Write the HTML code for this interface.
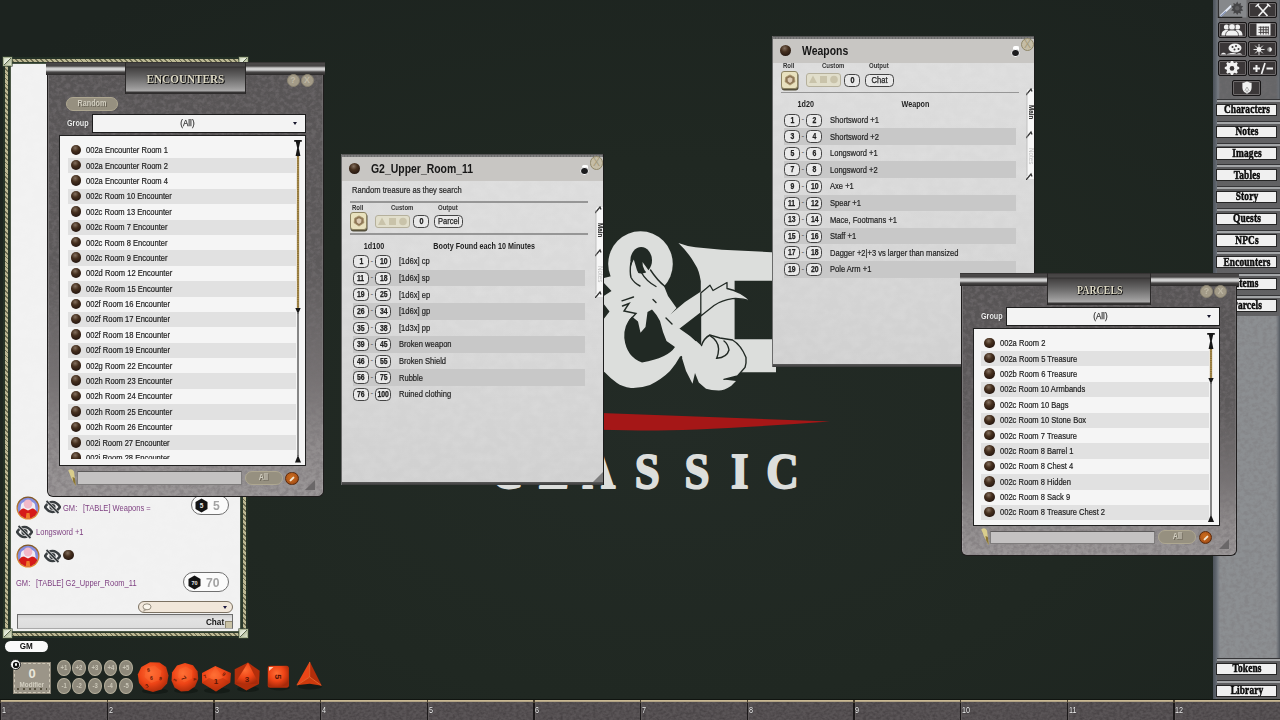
<!DOCTYPE html>
<html lang="en"><head><meta charset="utf-8"><title>Fantasy Grounds - D&amp;D Classic</title>
<style>
*{box-sizing:border-box;margin:0;padding:0}
html,body{width:1280px;height:720px;overflow:hidden;background:#1f2722}
body{position:relative;font-family:"Liberation Sans",sans-serif;font-size:9px;color:#262626;line-height:1}
#bg{position:absolute;left:0;top:0;width:1280px;height:720px;background:radial-gradient(ellipse 70% 75% at 52% 60%,#232b26 0,#202822 50%,#1c231f 100%)}
.tex{position:absolute;left:0;top:0;right:0;bottom:0;filter:url(#noise);opacity:.48}
.tex.p{filter:url(#paper);opacity:.22}
.t{display:inline-block;transform:scaleX(.84);transform-origin:0 50%;white-space:nowrap}
.ball{position:absolute;width:11px;height:11px;border-radius:50%;background:radial-gradient(circle at 42% 30%,#84705f 0,#46301f 36%,#2a1a12 72%,#1a100b 100%)}
/* list windows */
.lw{position:absolute;width:279px}
.lw-body{position:absolute;left:1.2px;top:11px;width:276.6px;bottom:0;border-radius:0 0 6px 6px;background:linear-gradient(#575455 0,#5d5a5b 45%,#767273 72%,#908c8d 88%,#9b9798 100%);border:1.3px solid #1e1c1c;border-top:0;overflow:hidden;box-shadow:inset 1px 0 0 rgba(255,255,255,.18),inset -1px 0 0 rgba(255,255,255,.1)}
.corn{position:absolute;top:0;height:13px;width:80px;background:linear-gradient(#2f2d2d 0,#4a4848 1.5px,#454343 4px,#8a8989 5px,#cdcdcd 6px,#d2d2d2 8px,#8e8d8d 9px,#4a4848 10px,#3a3838 11.5px,#2b2929 13px)}
.corn.l{left:0}.corn.r{right:0}
.plaque{position:absolute;top:0;height:32px;border-left:1px solid #2a2828;border-right:1px solid #2a2828;background:linear-gradient(#2e2c2c 0,#454343 1.5px,#4a4848 4px,#343232 5px,#454343 6.5px,#626161 14px,#959494 25px,#aaa9a9 29px,#3a3838 30px,#2c2a2a 32px);text-align:center}
.ptitle{display:inline-block;font:bold 12.5px "Liberation Serif",serif;color:#dedac6;text-shadow:1px 1px 0 #000,0 0 1.5px #000;line-height:34px;white-space:nowrap;transform-origin:50% 50%}
.enc .ptitle{transform:scaleX(.895)}
.par .ptitle{transform:translateX(1px) scaleX(.795)}
.rb{position:absolute;top:11.5px;width:13px;height:13px;border-radius:50%;background:#a39b88;border:1px solid #8b8472;color:#bfb8a5;font:bold 9px "Liberation Sans",sans-serif;text-align:center;line-height:11px}
.pill{position:absolute;height:14px;border-radius:7px;background:#969080;border:1.5px solid #aea791;color:#d2cec0;font:bold 8.5px "Liberation Sans",sans-serif;text-align:center;line-height:11px;text-shadow:1px 1px 0 #6a6558}
.pill span{display:inline-block;transform:scaleX(.85)}
.random{left:20px;top:35px;width:52px}
.all{left:198.5px;width:38px}
.grp{position:absolute;left:21px;color:#efefef;font:bold 9px "Liberation Sans",sans-serif;line-height:12px;transform:scaleX(.8);transform-origin:0 50%;text-shadow:0 0 1px #222}
.dd{position:absolute;left:46px;width:214px;height:18.5px;background:#f3f3f3;border:1px solid #1c1c1c;text-align:center;padding-right:24px;line-height:16.5px;font-size:9.5px;color:#333}
.dd .t{transform-origin:50% 50%;-webkit-text-stroke:.25px #333}
.dd i{position:absolute;right:8px;top:7px;border:2.7px solid transparent;border-top:3.4px solid #15152a;border-bottom:0}
.list{position:absolute;left:13px;width:247px;background:#f5f5f5;border:1px solid #202020;overflow:hidden}
.clip{position:absolute;left:0;top:6.6px;width:100%;overflow:hidden}
.row{position:relative;height:15.4px;line-height:15.4px}
.row.sh:before{content:"";position:absolute;left:7.5px;width:228px;top:0;bottom:0;background:#e1e1e1}
.row .ball{left:10.7px;top:2px;width:10.5px;height:10.5px}
.row .t{position:absolute;left:26.2px;top:.6px;color:#1c1c1c;-webkit-text-stroke:.2px #1c1c1c}
.sb{position:absolute;left:230.5px;top:-1px}
.fig{position:absolute;left:20.5px}
.filt{position:absolute;left:30.5px;width:165px;height:13.5px;background:#c4c2c2;border:1px solid #7e7c7c;border-top-color:#5c5a5a}
.edit{position:absolute;left:239.3px;width:13.4px;height:13.4px;border-radius:50%;background:radial-gradient(circle at 45% 40%,#cc6e1e 0,#b05618 60%,#74320c 100%);border:1px solid #5c2a0a}
.edit i{position:absolute;left:3px;top:5px;width:6px;height:2px;background:#f4e7d3;transform:rotate(-45deg);border-radius:1px}
.rsz{position:absolute;left:259px;width:0;height:0;border-left:10px solid transparent;border-bottom:10px solid #6a6768}
/* table windows */
.tw{position:absolute;width:263px;height:331.2px;background:linear-gradient(#dddddd 0,#d9d9d9 45%,#d0d0d0 100%);border-left:1px solid #6a6a6a;border-right:1px solid #1c1c1c;overflow:hidden}
.tband{position:absolute;left:0;top:0;width:100%;height:3.3px;background:repeating-linear-gradient(90deg,#7e7e7e 0,#7e7e7e 2px,#6e6e6e 2px,#6e6e6e 3px);border-top:1px solid #585858}
.thead{position:absolute;left:0;top:3.3px;width:100%;height:23.8px;background:#c8c6c3}
.ttitle{position:absolute;left:28.7px;top:8.6px;font:bold 12.5px "Liberation Sans",sans-serif;color:#161616;line-height:14px;white-space:nowrap}
.ttitle span{display:inline-block;transform:scaleX(.835);transform-origin:0 50%}
.lock{position:absolute;left:238px;top:9.6px;width:8.6px;height:12px}
.lock:before{content:"";position:absolute;left:2.3px;top:1.2px;width:4px;height:5px;border:1.3px solid #fff;border-bottom:0;border-radius:2px 2px 0 0;background:#fff}
.lock i{position:absolute;left:0;top:3.6px;width:8.6px;height:8.4px;border-radius:4.2px;background:#1c1c1e;border:1px solid #f6f6f6}
.cls{position:absolute;left:247.6px;top:2.2px;width:13.6px;height:13.6px;border-radius:50%;background:#c5bda6;border:1.1px solid #8f8769;color:#a39a7c;font:10.5px "Liberation Sans",sans-serif;text-align:center;line-height:11.6px}
.desc{position:absolute;left:10.4px;color:#1e1e1e;-webkit-text-stroke:.2px #1e1e1e;line-height:10px;color:#2b2b2b}
.hr{position:absolute;left:8px;width:238px;height:1.3px;background:#969696}
.lab{position:absolute;font:bold 7px "Liberation Sans",sans-serif;color:#333;line-height:8px;white-space:nowrap}
.lab span{display:inline-block;transform:scaleX(.86);transform-origin:0 50%}
.rollb{position:absolute;left:7.7px;width:17.6px;height:18px;border-radius:3px;background:#e9e2bf;border:1px solid #8d8463;box-shadow:.5px 1.5px 0 #55503c;padding:2px}
.rollb svg{display:block}
.cust{position:absolute;left:32.6px;width:35.3px;height:13.2px;border-radius:3px;background:#e1decb;border:1px solid #b5b09c}
.cust svg{position:absolute;left:-1px;top:-1px}
.nb{position:absolute;height:12.9px;border:1.5px solid #444;border-radius:4.4px;background:#e9e9e9;-webkit-text-stroke:.25px #202020;font:bold 8.6px "Liberation Sans",sans-serif;color:#202020;text-align:center;line-height:10.6px;white-space:nowrap}
.nb span{display:inline-block;transform:scaleX(.84)}
.zero{left:71.3px;width:15.4px}
.outb{left:92.4px;width:28.4px;font-weight:normal;font-size:9px}
.colh{position:absolute;text-align:center;font:bold 8.5px "Liberation Sans",sans-serif;color:#1e1e1e;line-height:10px;white-space:nowrap}
.colh span{display:inline-block;transform:scaleX(.845)}
.rows{position:absolute;left:0;width:100%}
.tr{position:relative;height:16.6px;line-height:16.6px}
.tr.sh:before{content:"";position:absolute;left:10.6px;width:232.4px;top:0;bottom:0;background:#c8c8c8}
.tr .a{left:10.9px;top:2px;width:16.3px}
.tr .b{left:33.4px;top:2px;width:16.1px}
.tr .nb span{transform:scaleX(.8)}
.dash{position:absolute;left:28.6px;top:-.5px;color:#444;font-size:8px}
.tr .t{position:absolute;left:57px;top:.3px;color:#1e1e1e;-webkit-text-stroke:.2px #1e1e1e}
.tabs{position:absolute;left:253px;width:10px;height:92px}
.tabs svg{position:absolute;left:0;top:0}
.tab{position:absolute;left:5px;font:bold 6.3px "Liberation Sans",sans-serif;color:#1a1a1a;transform:rotate(90deg) translateZ(0);transform-origin:0 0;white-space:nowrap;line-height:1}
.tab.m{top:17px;left:7.6px}
.tab.n{top:60px;left:7.6px;color:#bdbdbd;font-weight:normal}
.trsz{position:absolute;right:0;bottom:2.5px;width:0;height:0;border-left:10px solid transparent;border-bottom:10px solid #7d7d7d}
.tbot{position:absolute;left:0;bottom:0;width:100%;height:3px;background:linear-gradient(#5a5a5a,#3a3a3a)}
/* sidebar */
#side{position:absolute;left:1213px;top:0;width:67px;height:700px;background:#8c8f92;overflow:hidden}
#side .tex{opacity:.3}
.stop{position:absolute;left:0;top:0;width:100%;height:99px;background:#666668}
.sedge{position:absolute;left:0;top:0;width:100%;height:100%;background:linear-gradient(90deg,#4c525a 0,#5f656d 3px,#767b82 5px,rgba(118,123,130,0) 7px,rgba(100,104,110,0) 63px,#6a6e74 65.5px,#555a60 67px)}
.ib{position:absolute;width:29px;height:16px;background:#3b3738;border:1px solid #161415;border-radius:2px;box-shadow:inset 0 0 0 1px #6e6a6b}
.ib svg{position:absolute;left:-.5px;top:-.5px}
.ib0{position:absolute}
.sl{position:absolute;left:3.5px;width:63.5px;height:21.8px;border-top:1.2px solid #353537;background:linear-gradient(#a4a6a8 0,#a4a6a8 1.5px,#5c5c5e 2.5px,#626264 100%)}
.sbtn{position:absolute;left:3.4px;width:60.4px;height:12.4px;background:#f0f0f0;border:1px solid #252525;text-align:center;font:bold 13px "Liberation Serif",serif;color:#0c0c0c;line-height:10.5px;white-space:nowrap;overflow:hidden}
.sbtn span{position:absolute;left:50%;top:-.4px;transform:translateX(-50%) scaleX(.72) translateZ(0);letter-spacing:.2px;-webkit-text-stroke:.55px #0c0c0c}
/* bottom bar */
#bot{position:absolute;left:0;top:699px;width:1280px;height:21px;background:#5a5557;overflow:hidden;border-top:1px solid #101410}
#bot .tex{opacity:.6;filter:url(#noise2)}
.bline{position:absolute;left:0;top:0;width:100%;height:2.2px;background:linear-gradient(#bfae88,#d2c29e 50%,#8f826a)}
.bdiv{position:absolute;top:0;width:1.4px;height:21px;background:linear-gradient(#4a4030 0,#4a4030 3px,#1b1819 3px);box-shadow:1px 2px 0 #5e595a}
.bnum{position:absolute;top:5.5px;font:8.5px "Liberation Sans",sans-serif;color:#f4f4f4;line-height:8px;transform:scaleX(.85);transform-origin:0 50%;text-shadow:0 0 1px #000}
/* chat */
#chat{position:absolute;left:3px;top:57px;width:244.5px;height:581px;background:#243126}
.cgold{position:absolute;left:1.6px;top:1.8px;right:1.8px;bottom:1.8px;border:3.2px solid #a5a27c;border-image:repeating-linear-gradient(45deg,#bdb994 0,#bdb994 2.2px,#6e6d52 2.2px,#6e6d52 3.5px) 3;background:#2b3a2c}
.cpaper{position:absolute;left:8px;top:7.4px;width:228.6px;height:566.2px;background:#f1f1f1;overflow:hidden;box-shadow:0 0 0 .8px #55604f}
.corner{position:absolute;width:9.4px;height:9.4px;background:linear-gradient(135deg,#cdd6bc 0,#e9eedf 44%,#5b6650 50%,#b9c2a4 56%,#dfe5d0 100%);border:1.2px solid #a9b394;box-shadow:0 0 0 .6px #3c4a38}
.av,.eye,.hx{position:absolute}
.cm{position:absolute;font-size:9.3px;line-height:12px;color:#7d3f80;white-space:nowrap}
.cm .t{transform:scaleX(.81)}
.rpill{position:absolute;height:20px;border-radius:10px;background:#fbfbfb;border:1.1px solid #707070}
.rn{position:absolute;top:2.2px;font:bold 13.5px "Liberation Sans",sans-serif;color:#a3a3a3;line-height:15px;transform:scaleX(.9);transform-origin:0 50%}
.spk{position:absolute;width:95px;height:12.6px;border-radius:6.3px;background:#f1e7da;border:1.2px solid #7b7162}
.spk svg{position:absolute;left:3.5px;top:1.2px}
.spk i{position:absolute;right:4.6px;top:4.2px;border:2.4px solid transparent;border-top:3px solid #1b1740;border-bottom:0}
.cin{position:absolute;width:215.5px;height:15px;background:linear-gradient(#cfcfcf,#e2e2e2 30%,#dcdcdc);border:1px solid #6c6c6c;border-bottom-color:#a9a9a9}
.chatl{position:absolute;right:7.5px;top:1.5px;font:bold 9.5px "Liberation Sans",sans-serif;color:#111;line-height:11px;transform:scaleX(.86);transform-origin:100% 50%}
.cin em{position:absolute;right:0;bottom:0;width:7px;height:7px;background:#c9c2a6;border-left:1px solid #8d876e;border-top:1px solid #8d876e}
/* desktop bits */
.gm{position:absolute;left:5.3px;top:640.8px;width:42.6px;height:11.2px;border-radius:5.6px;background:#fafafa;text-align:center;font:bold 9px "Liberation Sans",sans-serif;color:#111;line-height:11.4px}
.gm span{display:inline-block;transform:scaleX(.9)}
.modbox{position:absolute;left:14.4px;top:663px;width:35.6px;height:29.6px;background:#9b9588;border:1.2px dashed #cfc9b8;outline:1px solid #8a8477;text-align:center}
.modbox .m0{position:absolute;left:0;width:100%;top:3px;font:bold 13px "Liberation Sans",sans-serif;color:#e9e6da;line-height:13px}
.modbox .m1{position:absolute;left:0;width:100%;top:16.5px;font:bold 7px "Liberation Sans",sans-serif;color:#d4d0c2;line-height:8px;transform:scaleX(.9)}
.modbox i{position:absolute;left:2px;right:2px;bottom:1.5px;height:2px;background:repeating-linear-gradient(90deg,#55503f 0,#55503f 2px,transparent 2px,transparent 5.8px)}
.ring{position:absolute;left:9.8px;top:658.5px;width:11.2px;height:11.2px;border-radius:50%;background:#f6f6f6;border:.5px solid #222}
.ring i{position:absolute;left:2px;top:2px;width:6.2px;height:6.2px;border-radius:50%;background:#151515;box-shadow:inset 0 0 0 1.5px #151515}
.ring i:after{content:"";position:absolute;left:1.8px;top:1.8px;width:2.6px;height:2.6px;background:#f6f6f6;border-radius:1px}
.mb{position:absolute;width:13.8px;height:16.4px;border-radius:50%;background:#8e897b;border:1.2px solid #b3ad9a;color:#cbc7b8;font:bold 7px "Liberation Sans",sans-serif;text-align:center;line-height:14px}
.mb span{display:inline-block;transform:scaleX(.85)}

</style></head>
<body>
<svg width="0" height="0" style="position:absolute">
<defs>
<filter id="noise" x="0" y="0" width="100%" height="100%" color-interpolation-filters="sRGB">
<feTurbulence type="fractalNoise" baseFrequency="0.22 0.26" numOctaves="3" seed="4" result="n"/>
<feColorMatrix type="matrix" values="0 0 0 0 0.47  0 0 0 0 0.45  0 0 0 0 0.46  3 0 0 0 -1.15"/>
<feGaussianBlur stdDeviation=".7"/>
</filter>
<filter id="noise2" x="0" y="0" width="100%" height="100%" color-interpolation-filters="sRGB">
<feTurbulence type="fractalNoise" baseFrequency="0.3 0.4" numOctaves="2" seed="9"/>
<feColorMatrix type="matrix" values="0 0 0 0 0.15  0 0 0 0 0.13  0 0 0 0 0.14  1.2 0 0 0 -0.4"/>
</filter>
<filter id="paper" x="0" y="0" width="100%" height="100%" color-interpolation-filters="sRGB">
<feTurbulence type="fractalNoise" baseFrequency="0.09 0.12" numOctaves="2" seed="12"/>
<feColorMatrix type="matrix" values="0 0 0 0 1  0 0 0 0 1  0 0 0 0 1  0.9 0 0 0 -0.3"/>
</filter>
</defs>
</svg>
<div id="bg"></div>
<svg id="logo" style="position:absolute;left:470px;top:220px" width="400" height="290" viewBox="470 220 400 290">
<g fill="#dcdedc">
<!-- D letter -->
<path d="M678.4 243Q686 246 695.5 247.3L722 249.8L776 252.4V280.7H734.6V339.3H776V372.2H700.8V281.2Q699 270 695.5 265Q689 253 678.4 243Z"/>
<!-- upper ring -->
<ellipse cx="640.5" cy="264" rx="32.3" ry="32.8"/>
<!-- lower bowl -->
<path d="M596 290L640 284L668 320L690 352L680 356.5Q676 364 670 371Q662 379 650 385Q640 388.5 631 388Q622 386.5 617 383Q610 378 605 372.5L596 366Z"/>
<!-- head, neck, diagonal body -->
<path d="M600 279L612 276L640 282L664 286L668 296L676.5 308L671 314L669 321L680 329L690 336L701 346L716 337L722 356L700 372L684 359L672 344L660 322L640 300L600 300Z"/>
<!-- wing stroke -->
<path d="M664 319L669 315.5L685 302L701 291.5L704 300L701 312L679 329L668 323Z"/>
<!-- tail -->
<path d="M682 358Q690 340 710 335L720 338L732.5 340Q741 345 746 357.5Q746.5 363 745 367.5L737.5 376L724 379.4L736 381L731 386Q724 390.5 718.8 390.6Q711 390.5 706 388.8L698.8 382.5L695 373L692.5 383.8L686 371Z"/>
</g>
<g fill="#212924">
<!-- upper hole -->
<ellipse cx="641.2" cy="260.3" rx="10.8" ry="13.2"/>
<!-- lower hole -->
<path d="M624.3 338Q623.5 325 632 316.5L638 321.5L640.5 332.8L645.5 327L647.5 312L652 309.5L656.5 315L660 321L663 332L666.5 341L675 347Q668 358 642 362.5Q626.5 357 624.3 338Z"/>
<!-- gap under wing stroke -->
<path d="M683 329.5L701.2 313V345.5L690 335.5Z"/>
<!-- mane notches -->
<path d="M603 282L611.5 291L603 296.5ZM603 303L609.5 311.5L603 320Z"/>
</g>
<g fill="#dcdedc">
<path d="M630.2 279Q629.8 266 633.8 259.6Q636 270 641.6 280Z"/>
<path d="M651 277Q642 270 642.5 262Q648 270 655.5 279Z"/>
</g>
<!-- wing over D -->
<path d="M700.8 293L710 285.2L713 290.5L727 282.5L727 288.5Q740 291 751 301Q742 298 732.5 298.6Q722 300 714 305.5L700.8 316Z" fill="#dcdedc" stroke="#212924" stroke-width="1.3" stroke-linejoin="round"/>
<g fill="none" stroke="#212924" stroke-width="1.4" stroke-linecap="round">
<path d="M630.8 263Q629.6 272 631 277.5Q634 283 640 286"/>
<path d="M641.4 272.5Q646 281 656 286.5"/>
<path d="M650.5 270Q657 280 665 286.5"/>
<path d="M622 300.8L633.5 297"/>
<path d="M622.5 306L629 303.5L624 311L636 313.5L630 320"/>
<path d="M653 299.5L656 302.5"/>
<path d="M709.7 335.4Q718.5 341 718.6 349Q718.5 354 716.7 358.3Q727 357.5 729 350Q728 344 724 341"/>
<path d="M666 318L672 324"/>
<path d="M701.5 345.5Q704 338 710 335L720 338L732.5 340Q741 345 746 357.5Q746.5 363 745 367.5L737.5 376L724 379.4"/>
</g>
<path d="M560 411.6L830 421.5Q700 431 640 430.5Q600 430 560 428Z" fill="#a51717"/>
<text y="488.2" transform="scale(0.9 1)" text-anchor="middle" font-family="Liberation Serif, serif" font-weight="bold" font-size="50" fill="#dcdedc" stroke="#dcdedc" stroke-width="1.9" stroke-linejoin="round" x="563.3 615.6 665.6 719.3 774.4 821.9 869.4">CLASSIC</text>
</svg>
<div id="side"><div class="stop"></div><div class="tex"></div><div class="sedge"></div>
<svg class="ib0" style="left:4px;top:0" width="30" height="19" viewBox="0 0 30 19"><rect x=".5" y="0" width="29" height="17.5" fill="#86888b"/><path d="M1.3 0v17.4h24" stroke="#222" stroke-width="1.1" fill="none"/><path d="M3.5 16L14.3 5.8" stroke="#e3e9f6" stroke-width="2"/><path d="M3.5 16.5L9 11.5" stroke="#7f8fb3" stroke-width="1.2"/><path d="M20.2 1.5l1.3 2.4 2.6-1-.6 2.7 2.7.6-1.8 2.1 1.8 2.1-2.7.6.6 2.7-2.6-1-1.3 2.4-1.3-2.4-2.6 1 .6-2.7-2.7-.6 1.8-2.1-1.8-2.1 2.7-.6-.6-2.7 2.6 1z" fill="#454547"/><circle cx="20.2" cy="8.3" r="2.2" fill="#5c5c5e"/></svg>
<div class="ib" style="left:35px;top:2px"><svg width="28" height="15" viewBox="0 0 28 15"><path d="M8 1.5l10.5 11.5M20 1.5L9.5 13" stroke="#f2f2f2" stroke-width="1.7"/><path d="M6.5 3.8l3.6-3M21.5 3.8l-3.6-3" stroke="#f2f2f2" stroke-width="1.3"/></svg></div>
<div class="ib" style="left:4.5px;top:21.5px"><svg width="28" height="15" viewBox="0 0 28 15"><circle cx="8.5" cy="5" r="2.6" fill="#f2f2f2"/><circle cx="19.5" cy="5" r="2.6" fill="#f2f2f2"/><path d="M3.5 13.5c0-4 2-5.5 5-5.5s5 1.5 5 5.5zM14.5 13.5c0-4 2-5.5 5-5.5s5 1.5 5 5.5z" fill="#f2f2f2"/><circle cx="14" cy="5" r="3.4" fill="#f2f2f2" stroke="#3a3637" stroke-width=".8"/><path d="M7.5 14c0-4.5 2.5-6 6.5-6s6.5 1.5 6.5 6z" fill="#f2f2f2" stroke="#3a3637" stroke-width=".8"/></svg></div>
<div class="ib" style="left:35px;top:21.5px"><svg width="28" height="15" viewBox="0 0 28 15"><rect x="7.5" y="1.5" width="14" height="12" fill="#f2f2f2"/><path d="M9.5 5.2h10M9.5 7.8h10M9.5 10.4h10M11.7 4.5v8M14.3 4.5v8M17 4.5v8M19.3 4.5v8" stroke="#3a3637" stroke-width=".9"/></svg></div>
<div class="ib" style="left:4.5px;top:41px"><svg width="28" height="15" viewBox="0 0 28 15"><ellipse cx="17" cy="6" rx="6.5" ry="4.5" fill="#f2f2f2"/><path d="M2.5 12.5c2-2.5 4-2.5 6 0 3-2 8-2 10-.5 2-1 4-1 6 .5z" fill="#f2f2f2"/><circle cx="14.5" cy="5" r="1" fill="#3a3637"/><circle cx="18" cy="4" r="1" fill="#3a3637"/><circle cx="16.5" cy="7.5" r="1" fill="#3a3637"/><circle cx="20.5" cy="7" r="1" fill="#3a3637"/></svg></div>
<div class="ib" style="left:35px;top:41px"><svg width="28" height="15" viewBox="0 0 28 15"><circle cx="10" cy="7.5" r="2.4" fill="#f2f2f2"/><path d="M10 2v11M4.5 7.5h11M6.2 3.7l7.6 7.6M13.8 3.7l-7.6 7.6" stroke="#f2f2f2" stroke-width=".9"/><circle cx="20.5" cy="7.5" r="2.3" fill="#8e8e8e"/><path d="M20.5 5.2a2.3 2.3 0 0 1 0 4.6z" fill="#f2f2f2"/></svg></div>
<div class="ib" style="left:4.5px;top:60px"><svg width="28" height="15" viewBox="0 0 28 15"><path d="M14 2.2l1 .1.5 1.7 1.3.6 1.6-.9 1.4 1.4-.9 1.6.6 1.3 1.7.5v2l-1.7.5-.6 1.3.9 1.6-1.4 1.4-1.6-.9-1.3.6-.5 1.7h-2l-.5-1.7-1.3-.6-1.6.9-1.4-1.4.9-1.6-.6-1.3-1.7-.5v-2l1.7-.5.6-1.3-.9-1.6 1.4-1.4 1.6.9 1.3-.6.5-1.7z" transform="translate(0,-2.6)" fill="#f2f2f2"/><circle cx="14" cy="7.4" r="2.3" fill="#3a3637"/></svg></div>
<div class="ib" style="left:35px;top:60px"><svg width="28" height="15" viewBox="0 0 28 15"><path d="M4 7.5h7M7.5 4v7M17.5 7.5h6.5" stroke="#f2f2f2" stroke-width="2"/><path d="M12.5 13L16 2" stroke="#f2f2f2" stroke-width="1.7"/></svg></div>
<div class="ib" style="left:19px;top:79.5px"><svg width="28" height="15" viewBox="0 0 28 15"><path d="M14 1.5c2 1 3.5 1.3 4.6 1.3v5c0 3-2 4.8-4.6 6-2.6-1.2-4.6-3-4.6-6v-5c1.1 0 2.6-.3 4.6-1.3z" fill="#f2f2f2"/><path d="M11.8 11l2.2-4 2.2 4M12.6 13l1.4-2.6 1.4 2.6" stroke="#9a9a9a" stroke-width=".8" fill="none"/></svg></div>
<div class="sl" style="top:99.1px"></div><div class="sbtn" style="top:103.8px"><span>Characters</span></div>
<div class="sl" style="top:120.8px"></div><div class="sbtn" style="top:125.5px"><span>Notes</span></div>
<div class="sl" style="top:142.7px"></div><div class="sbtn" style="top:147.4px"><span>Images</span></div>
<div class="sl" style="top:164.4px"></div><div class="sbtn" style="top:169.1px"><span>Tables</span></div>
<div class="sl" style="top:186.1px"></div><div class="sbtn" style="top:190.8px"><span>Story</span></div>
<div class="sl" style="top:208.1px"></div><div class="sbtn" style="top:212.8px"><span>Quests</span></div>
<div class="sl" style="top:229.6px"></div><div class="sbtn" style="top:234.3px"><span>NPCs</span></div>
<div class="sl" style="top:251.3px"></div><div class="sbtn" style="top:256px"><span>Encounters</span></div>
<div class="sl" style="top:273.1px"></div><div class="sbtn" style="top:277.8px"><span>Items</span></div>
<div class="sl" style="top:294.7px"></div><div class="sbtn" style="top:299.4px"><span>Parcels</span></div>
<div class="sl" style="top:657.8px"></div><div class="sbtn" style="top:662.5px"><span>Tokens</span></div>
<div class="sl" style="top:680.1px"></div><div class="sbtn" style="top:684.8px"><span>Library</span></div>
</div>
<div id="bot"><div class="tex"></div><div class="bline"></div>
<div class="bdiv" style="left:0.0px"></div><span class="bnum" style="left:2.0px">1</span>
<div class="bdiv" style="left:106.7px"></div><span class="bnum" style="left:108.7px">2</span>
<div class="bdiv" style="left:213.3px"></div><span class="bnum" style="left:215.3px">3</span>
<div class="bdiv" style="left:320.0px"></div><span class="bnum" style="left:322.0px">4</span>
<div class="bdiv" style="left:426.7px"></div><span class="bnum" style="left:428.7px">5</span>
<div class="bdiv" style="left:533.4px"></div><span class="bnum" style="left:535.4px">6</span>
<div class="bdiv" style="left:640.0px"></div><span class="bnum" style="left:642.0px">7</span>
<div class="bdiv" style="left:746.7px"></div><span class="bnum" style="left:748.7px">8</span>
<div class="bdiv" style="left:853.4px"></div><span class="bnum" style="left:855.4px">9</span>
<div class="bdiv" style="left:960.0px"></div><span class="bnum" style="left:962.0px">10</span>
<div class="bdiv" style="left:1066.7px"></div><span class="bnum" style="left:1068.7px">11</span>
<div class="bdiv" style="left:1173.4px"></div><span class="bnum" style="left:1175.4px">12</span>
</div>
<div id="chat"><svg width="0" height="0" style="position:absolute"><defs><linearGradient id="avg" x1="0" y1="0" x2="0" y2="1"><stop offset="0" stop-color="#7a5426"/><stop offset=".5" stop-color="#c27a2a"/><stop offset="1" stop-color="#ee8c2c"/></linearGradient></defs></svg><div class="cgold"></div><div class="cpaper"><div class="tex p"></div></div>
<div class="corner" style="left:0px;top:0px"></div><div class="corner" style="left:235.5px;top:0px"></div><div class="corner" style="left:0px;top:572px"></div><div class="corner" style="left:235.5px;top:572px"></div>
<svg class="av" style="left:13px;top:438.5px" width="24" height="24" viewBox="0 0 24 24"><defs><clipPath id="ca1"><circle cx="12" cy="12" r="10.3"/></clipPath></defs><circle cx="12" cy="12" r="11.5" fill="url(#avg)"/><circle cx="12" cy="12" r="10.3" fill="#858ee0"/><g clip-path="url(#ca1)"><path d="M5 9c1-5 13-5 14 0l1 7H4z" fill="#f1ecf2"/><ellipse cx="12" cy="8" rx="4.3" ry="4.6" fill="#f2b9c9"/><path d="M8 11c1.5 3 6.5 3 8 0l1 4H7z" fill="#f6f3f6"/><path d="M1 24c0-8 4-11.5 7-11.5l4 2 4-2c3 0 7 3.5 7 11.5z" fill="#d61a18"/><path d="M10.5 17h3l1 7h-5z" fill="#ee7a2a"/></g></svg>
<svg class="eye" style="left:40.5px;top:443px" width="17" height="14" viewBox="0 0 17 14"><path d="M1 7c2.5-3.8 5-5 7.5-5s5 1.2 7.5 5c-2.5 3.8-5 5-7.5 5S3.5 10.8 1 7z" fill="none" stroke="#393e41" stroke-width="2.4"/><circle cx="8.5" cy="7" r="3.1" fill="#393e41"/><path d="M2.5 1L14 13" stroke="#f2f2f2" stroke-width="3"/><path d="M2.5 1L14.5 13" stroke="#393e41" stroke-width="1.8"/></svg>
<div class="cm" style="left:60px;top:444.5px"><span class="t">GM:</span></div><div class="cm" style="left:80px;top:444.5px"><span class="t">[TABLE] Weapons =</span></div>
<div class="rpill" style="left:188px;top:437.5px;width:37.5px"><svg class="hx" style="left:2.3px;top:2.2px" width="15" height="15" viewBox="0 0 15 15"><path d="M7.5 .6l6 3.4v7l-6 3.4-6-3.4V4z" fill="#141414"/><text x="7.5" y="10.3" font-family="Liberation Sans, sans-serif" font-size="6.5" font-weight="bold" fill="#e9e9e9" text-anchor="middle">5</text></svg><span class="rn" style="left:20.5px">5</span></div>
<svg class="eye" style="left:12.5px;top:468px" width="17" height="14" viewBox="0 0 17 14"><path d="M1 7c2.5-3.8 5-5 7.5-5s5 1.2 7.5 5c-2.5 3.8-5 5-7.5 5S3.5 10.8 1 7z" fill="none" stroke="#393e41" stroke-width="2.4"/><circle cx="8.5" cy="7" r="3.1" fill="#393e41"/><path d="M2.5 1L14 13" stroke="#f2f2f2" stroke-width="3"/><path d="M2.5 1L14.5 13" stroke="#393e41" stroke-width="1.8"/></svg>
<div class="cm" style="left:32.6px;top:469px"><span class="t">Longsword +1</span></div>
<svg class="av" style="left:13px;top:487px" width="24" height="24" viewBox="0 0 24 24"><defs><clipPath id="ca2"><circle cx="12" cy="12" r="10.3"/></clipPath></defs><circle cx="12" cy="12" r="11.5" fill="url(#avg)"/><circle cx="12" cy="12" r="10.3" fill="#858ee0"/><g clip-path="url(#ca2)"><path d="M5 9c1-5 13-5 14 0l1 7H4z" fill="#f1ecf2"/><ellipse cx="12" cy="8" rx="4.3" ry="4.6" fill="#f2b9c9"/><path d="M8 11c1.5 3 6.5 3 8 0l1 4H7z" fill="#f6f3f6"/><path d="M1 24c0-8 4-11.5 7-11.5l4 2 4-2c3 0 7 3.5 7 11.5z" fill="#d61a18"/><path d="M10.5 17h3l1 7h-5z" fill="#ee7a2a"/></g></svg>
<svg class="eye" style="left:40.5px;top:492px" width="17" height="14" viewBox="0 0 17 14"><path d="M1 7c2.5-3.8 5-5 7.5-5s5 1.2 7.5 5c-2.5 3.8-5 5-7.5 5S3.5 10.8 1 7z" fill="none" stroke="#393e41" stroke-width="2.4"/><circle cx="8.5" cy="7" r="3.1" fill="#393e41"/><path d="M2.5 1L14 13" stroke="#f2f2f2" stroke-width="3"/><path d="M2.5 1L14.5 13" stroke="#393e41" stroke-width="1.8"/></svg>
<b class="ball" style="left:60.3px;top:492.8px;width:10.4px;height:10.4px"></b>
<div class="cm" style="left:13px;top:519.5px"><span class="t">GM:</span></div><div class="cm" style="left:32.6px;top:519.5px"><span class="t">[TABLE] G2_Upper_Room_11</span></div>
<div class="rpill" style="left:180px;top:515px;width:45.8px"><svg class="hx" style="left:2.7px;top:2.4px" width="15" height="15" viewBox="0 0 15 15"><path d="M7.5 .6l6 3.4v7l-6 3.4-6-3.4V4z" fill="#141414"/><text x="7.5" y="10.3" font-family="Liberation Sans, sans-serif" font-size="5.5" font-weight="bold" fill="#e9e9e9" text-anchor="middle">70</text></svg><span class="rn" style="left:21.5px">70</span></div>
<div class="spk" style="left:134.5px;top:543.6px"><svg width="10" height="9" viewBox="0 0 10 9"><ellipse cx="5" cy="3.8" rx="4" ry="3" fill="#fbf6ec" stroke="#8a8172" stroke-width=".9"/><path d="M2.5 6l-.8 2.3 2.5-1.7z" fill="#fbf6ec" stroke="#8a8172" stroke-width=".7"/></svg><i></i></div>
<div class="cin" style="left:14px;top:556.7px"><span class="chatl">Chat</span><em></em></div>
</div>
<div class="lw enc" style="left:46px;top:62px;height:434.5px">
<div class="lw-body"><div class="tex"></div></div>
<div class="corn l" style="width:80.0px"></div><div class="corn r" style="width:80.0px"></div>
<div class="plaque" style="left:79.0px;width:121px"><span class="ptitle">ENCOUNTERS</span></div>
<div class="rb" style="left:240.5px">?</div><div class="rb" style="left:254.5px">X</div>
<div class="pill random"><span>Random</span></div>
<div class="grp" style="top:55px">Group</div>
<div class="dd" style="top:52px"><span class="t">(All)</span><i></i></div>
<div class="list" style="top:73px;height:331.0px"><div class="clip" style="height:316.5px">
<div class="row"><b class="ball"></b><span class="t">002a Encounter Room 1</span></div>
<div class="row sh"><b class="ball"></b><span class="t">002a Encounter Room 2</span></div>
<div class="row"><b class="ball"></b><span class="t">002a Encounter Room 4</span></div>
<div class="row sh"><b class="ball"></b><span class="t">002c Room 10 Encounter</span></div>
<div class="row"><b class="ball"></b><span class="t">002c Room 13 Encounter</span></div>
<div class="row sh"><b class="ball"></b><span class="t">002c Room 7 Encounter</span></div>
<div class="row"><b class="ball"></b><span class="t">002c Room 8 Encounter</span></div>
<div class="row sh"><b class="ball"></b><span class="t">002c Room 9 Encounter</span></div>
<div class="row"><b class="ball"></b><span class="t">002d Room 12 Encounter</span></div>
<div class="row sh"><b class="ball"></b><span class="t">002e Room 15 Encounter</span></div>
<div class="row"><b class="ball"></b><span class="t">002f Room 16 Encounter</span></div>
<div class="row sh"><b class="ball"></b><span class="t">002f Room 17 Encounter</span></div>
<div class="row"><b class="ball"></b><span class="t">002f Room 18 Encounter</span></div>
<div class="row sh"><b class="ball"></b><span class="t">002f Room 19 Encounter</span></div>
<div class="row"><b class="ball"></b><span class="t">002g Room 22 Encounter</span></div>
<div class="row sh"><b class="ball"></b><span class="t">002h Room 23 Encounter</span></div>
<div class="row"><b class="ball"></b><span class="t">002h Room 24 Encounter</span></div>
<div class="row sh"><b class="ball"></b><span class="t">002h Room 25 Encounter</span></div>
<div class="row"><b class="ball"></b><span class="t">002h Room 26 Encounter</span></div>
<div class="row sh"><b class="ball"></b><span class="t">002i Room 27 Encounter</span></div>
<div class="row"><b class="ball"></b><span class="t">002i Room 28 Encounter</span></div>
</div>
<svg class="sb" width="14" height="331" viewBox="0 0 14 331"><path d="M3.2 5h7.6v1.7H9.2L7.8 13l1.6 8H4.6l1.6-8L4.8 6.7H3.2z" fill="#161616"/><path d="M7 21V174" stroke="#ab8f50" stroke-width="2.3"/><path d="M7 21V174" stroke="#5a4410" stroke-width=".7" stroke-dasharray="1.2 1"/><path d="M4.3 173h5.4L7 179z" fill="#161616"/><path d="M7 178V321" stroke="#161616" stroke-width="1"/><path d="M7 320l2.6 6.5 .5 1H3.9l.5-1z" fill="#161616"/></svg>
</div>
<svg class="fig" style="top:405.5px" width="10" height="19" viewBox="0 0 10 19"><path d="M1.2 2.5Q4.5 -.5 7 3.5L7.8 10 8.8 18 6.2 13.5 4 9.5 2.6 5.5z" fill="#d9cd8c"/><path d="M5.5 9L7.8 10l1 8-2.6-4.5z" fill="#8a7432"/></svg>
<div class="filt" style="top:409.0px"></div>
<div class="pill all" style="top:408.5px"><span>All</span></div>
<div class="edit" style="top:409.5px"><i></i></div>
<div class="rsz" style="top:417.5px"></div>
</div>
<div class="tw" style="left:341px;top:153.8px">
<div class="tex p"></div>
<div class="tband"></div><div class="thead"></div>
<b class="ball" style="left:6.8px;top:9.3px"></b><div class="ttitle"><span>G2_Upper_Room_11</span></div>
<div class="lock"><i></i></div><div class="cls">X</div>
<div class="desc" style="top:31.2px"><span class="t">Random treasure as they search</span></div><div class="hr" style="top:47.7px"></div>
<div class="lab" style="left:10.2px;top:50.2px"><span>Roll</span></div><div class="lab" style="left:49.1px;top:50.2px"><span>Custom</span></div><div class="lab" style="left:96.4px;top:50.2px"><span>Output</span></div>
<div class="rollb" style="top:58.7px"><svg width="12" height="12" viewBox="0 0 12 12"><path d="M6 .9l4.3 2.3.6 4.6L6 11.1 1.1 7.8l.6-4.6z" fill="#8d7656" stroke="#a8946c" stroke-width=".8"/><path d="M6 3.3l2.500 1.3-.4 3L6 9 3.9 7.6l-.4-3z" fill="#dccbb2"/></svg></div>
<div class="cust" style="top:61.2px"><svg width="35" height="13" viewBox="0 0 35 13"><path d="M7 2.5l4 7.5H3z" fill="#c9c3aa"/><rect x="14" y="3" width="7" height="7" fill="#c9c3aa"/><circle cx="28" cy="6.5" r="3.8" fill="#c9c3aa"/></svg></div>
<div class="nb zero" style="top:61.7px"><span>0</span></div>
<div class="nb outb" style="top:61.7px"><span>Parcel</span></div>
<div class="hr" style="top:79.7px"></div>
<div class="colh" style="left:2.5px;width:60px;top:87.2px"><span>1d100</span></div><div class="colh" style="left:62.7px;width:160px;top:87.2px"><span>Booty Found each 10 Minutes</span></div>
<div class="rows" style="top:99.4px">
<div class="tr"><span class="nb a"><span>1</span></span><span class="dash">-</span><span class="nb b"><span>10</span></span><span class="t">[1d6x] cp</span></div>
<div class="tr sh"><span class="nb a"><span>11</span></span><span class="dash">-</span><span class="nb b"><span>18</span></span><span class="t">[1d6x] sp</span></div>
<div class="tr"><span class="nb a"><span>19</span></span><span class="dash">-</span><span class="nb b"><span>25</span></span><span class="t">[1d6x] ep</span></div>
<div class="tr sh"><span class="nb a"><span>26</span></span><span class="dash">-</span><span class="nb b"><span>34</span></span><span class="t">[1d6x] gp</span></div>
<div class="tr"><span class="nb a"><span>35</span></span><span class="dash">-</span><span class="nb b"><span>38</span></span><span class="t">[1d3x] pp</span></div>
<div class="tr sh"><span class="nb a"><span>39</span></span><span class="dash">-</span><span class="nb b"><span>45</span></span><span class="t">Broken weapon</span></div>
<div class="tr"><span class="nb a"><span>46</span></span><span class="dash">-</span><span class="nb b"><span>55</span></span><span class="t">Broken Shield</span></div>
<div class="tr sh"><span class="nb a"><span>56</span></span><span class="dash">-</span><span class="nb b"><span>75</span></span><span class="t">Rubble</span></div>
<div class="tr"><span class="nb a"><span>76</span></span><span class="dash">-</span><span class="nb b"><span>100</span></span><span class="t">Ruined clothing</span></div>
</div>
<div class="tabs" style="top:52.2px"><svg width="10" height="92" viewBox="0 0 10 92"><path d="M.8 4Q.8 1 4 1H10V91H4Q.8 91 .8 88z" fill="#f6f6f6"/><path d="M0 7l5-6 1 2.5M0 50l5-6 1 2.5M0 92l5-6 1 2.5" fill="none" stroke="#333" stroke-width="1.3"/><path d="M1 4V88" stroke="#aaa" stroke-width=".7"/></svg><span class="tab m">Main</span><span class="tab n">Notes</span></div>
<div class="trsz"></div><div class="tbot"></div>
</div>
<div class="tw" style="left:772px;top:35.7px">
<div class="tex p"></div>
<div class="tband"></div><div class="thead"></div>
<b class="ball" style="left:6.8px;top:9.3px"></b><div class="ttitle"><span>Weapons</span></div>
<div class="lock"><i></i></div><div class="cls">X</div>
<div class="lab" style="left:10.2px;top:26.8px"><span>Roll</span></div><div class="lab" style="left:49.1px;top:26.8px"><span>Custom</span></div><div class="lab" style="left:96.4px;top:26.8px"><span>Output</span></div>
<div class="rollb" style="top:35.3px"><svg width="12" height="12" viewBox="0 0 12 12"><path d="M6 .9l4.3 2.3.6 4.6L6 11.1 1.1 7.8l.6-4.6z" fill="#8d7656" stroke="#a8946c" stroke-width=".8"/><path d="M6 3.3l2.500 1.3-.4 3L6 9 3.9 7.6l-.4-3z" fill="#dccbb2"/></svg></div>
<div class="cust" style="top:37.8px"><svg width="35" height="13" viewBox="0 0 35 13"><path d="M7 2.5l4 7.5H3z" fill="#c9c3aa"/><rect x="14" y="3" width="7" height="7" fill="#c9c3aa"/><circle cx="28" cy="6.5" r="3.8" fill="#c9c3aa"/></svg></div>
<div class="nb zero" style="top:38.3px"><span>0</span></div>
<div class="nb outb" style="top:38.3px"><span>Chat</span></div>
<div class="hr" style="top:56.3px"></div>
<div class="colh" style="left:2.5px;width:60px;top:63.8px"><span>1d20</span></div><div class="colh" style="left:62.7px;width:160px;top:63.8px"><span>Weapon</span></div>
<div class="rows" style="top:76.0px">
<div class="tr"><span class="nb a"><span>1</span></span><span class="dash">-</span><span class="nb b"><span>2</span></span><span class="t">Shortsword +1</span></div>
<div class="tr sh"><span class="nb a"><span>3</span></span><span class="dash">-</span><span class="nb b"><span>4</span></span><span class="t">Shortsword +2</span></div>
<div class="tr"><span class="nb a"><span>5</span></span><span class="dash">-</span><span class="nb b"><span>6</span></span><span class="t">Longsword +1</span></div>
<div class="tr sh"><span class="nb a"><span>7</span></span><span class="dash">-</span><span class="nb b"><span>8</span></span><span class="t">Longsword +2</span></div>
<div class="tr"><span class="nb a"><span>9</span></span><span class="dash">-</span><span class="nb b"><span>10</span></span><span class="t">Axe +1</span></div>
<div class="tr sh"><span class="nb a"><span>11</span></span><span class="dash">-</span><span class="nb b"><span>12</span></span><span class="t">Spear +1</span></div>
<div class="tr"><span class="nb a"><span>13</span></span><span class="dash">-</span><span class="nb b"><span>14</span></span><span class="t">Mace, Footmans +1</span></div>
<div class="tr sh"><span class="nb a"><span>15</span></span><span class="dash">-</span><span class="nb b"><span>16</span></span><span class="t">Staff +1</span></div>
<div class="tr"><span class="nb a"><span>17</span></span><span class="dash">-</span><span class="nb b"><span>18</span></span><span class="t">Dagger +2|+3 vs larger than mansized</span></div>
<div class="tr sh"><span class="nb a"><span>19</span></span><span class="dash">-</span><span class="nb b"><span>20</span></span><span class="t">Pole Arm +1</span></div>
</div>
<div class="tabs" style="top:52.8px"><svg width="10" height="92" viewBox="0 0 10 92"><path d="M.8 4Q.8 1 4 1H10V91H4Q.8 91 .8 88z" fill="#f6f6f6"/><path d="M0 7l5-6 1 2.5M0 50l5-6 1 2.5M0 92l5-6 1 2.5" fill="none" stroke="#333" stroke-width="1.3"/><path d="M1 4V88" stroke="#aaa" stroke-width=".7"/></svg><span class="tab m">Main</span><span class="tab n">Notes</span></div>
<div class="trsz"></div><div class="tbot"></div>
</div>
<div class="lw par" style="left:959.5px;top:273px;height:283px">
<div class="lw-body"><div class="tex"></div></div>
<div class="corn l" style="width:88.5px"></div><div class="corn r" style="width:88.5px"></div>
<div class="plaque" style="left:87.5px;width:104px"><span class="ptitle">PARCELS</span></div>
<div class="rb" style="left:240.5px">?</div><div class="rb" style="left:254.5px">X</div>
<div class="grp" style="top:37px">Group</div>
<div class="dd" style="top:34px"><span class="t">(All)</span><i></i></div>
<div class="list" style="top:55px;height:197.5px"><div class="clip" style="height:190px">
<div class="row"><b class="ball"></b><span class="t">002a Room 2</span></div>
<div class="row sh"><b class="ball"></b><span class="t">002a Room 5 Treasure</span></div>
<div class="row"><b class="ball"></b><span class="t">002b Room 6 Treasure</span></div>
<div class="row sh"><b class="ball"></b><span class="t">002c Room 10 Armbands</span></div>
<div class="row"><b class="ball"></b><span class="t">002c Room 10 Bags</span></div>
<div class="row sh"><b class="ball"></b><span class="t">002c Room 10 Stone Box</span></div>
<div class="row"><b class="ball"></b><span class="t">002c Room 7 Treasure</span></div>
<div class="row sh"><b class="ball"></b><span class="t">002c Room 8 Barrel 1</span></div>
<div class="row"><b class="ball"></b><span class="t">002c Room 8 Chest 4</span></div>
<div class="row sh"><b class="ball"></b><span class="t">002c Room 8 Hidden</span></div>
<div class="row"><b class="ball"></b><span class="t">002c Room 8 Sack 9</span></div>
<div class="row sh"><b class="ball"></b><span class="t">002c Room 8 Treasure Chest 2</span></div>
</div>
<svg class="sb" width="14" height="197.5" viewBox="0 0 14 197.5"><path d="M3.2 5h7.6v1.7H9.2L7.8 13l1.6 8H4.6l1.6-8L4.8 6.7H3.2z" fill="#161616"/><path d="M7 21V51" stroke="#ab8f50" stroke-width="2.3"/><path d="M7 21V51" stroke="#5a4410" stroke-width=".7" stroke-dasharray="1.2 1"/><path d="M4.3 50h5.4L7 56z" fill="#161616"/><path d="M7 55V187.5" stroke="#161616" stroke-width="1"/><path d="M7 186.5l2.6 6.5 .5 1H3.9l.5-1z" fill="#161616"/></svg>
</div>
<svg class="fig" style="top:254.0px" width="10" height="19" viewBox="0 0 10 19"><path d="M1.2 2.5Q4.5 -.5 7 3.5L7.8 10 8.8 18 6.2 13.5 4 9.5 2.6 5.5z" fill="#d9cd8c"/><path d="M5.5 9L7.8 10l1 8-2.6-4.5z" fill="#8a7432"/></svg>
<div class="filt" style="top:257.5px"></div>
<div class="pill all" style="top:257.0px"><span>All</span></div>
<div class="edit" style="top:258.0px"><i></i></div>
<div class="rsz" style="top:266px"></div>
</div>
<div class="gm"><span>GM</span></div>
<div class="modbox"><span class="m0">0</span><span class="m1">Modifier</span><i></i></div>
<div class="ring"><i></i></div>
<div class="mb" style="left:56.9px;top:659.8px"><span>+1</span></div><div class="mb" style="left:72.4px;top:659.8px"><span>+2</span></div><div class="mb" style="left:88px;top:659.8px"><span>+3</span></div><div class="mb" style="left:103.6px;top:659.8px"><span>+4</span></div><div class="mb" style="left:119.3px;top:659.8px"><span>+5</span></div>
<div class="mb" style="left:56.9px;top:677.8px"><span>-1</span></div><div class="mb" style="left:72.4px;top:677.8px"><span>-2</span></div><div class="mb" style="left:88px;top:677.8px"><span>-3</span></div><div class="mb" style="left:103.6px;top:677.8px"><span>-4</span></div><div class="mb" style="left:119.3px;top:677.8px"><span>-5</span></div>
<svg id="dice" style="position:absolute;left:130px;top:655px" width="200" height="45" viewBox="130 655 200 45">
<defs><radialGradient id="dg" cx=".42" cy=".36" r=".68"><stop offset="0" stop-color="#ff6e34"/><stop offset=".55" stop-color="#ee4416"/><stop offset="1" stop-color="#a82a0a"/></radialGradient></defs>
<ellipse cx="155" cy="691" rx="13" ry="3" fill="#0c120e" opacity=".5"/><ellipse cx="186" cy="690.5" rx="12" ry="3" fill="#0c120e" opacity=".5"/><ellipse cx="217" cy="690.5" rx="13" ry="3" fill="#0c120e" opacity=".5"/><ellipse cx="248" cy="689" rx="11" ry="3" fill="#0c120e" opacity=".5"/><ellipse cx="279.5" cy="687.5" rx="10.5" ry="3" fill="#0c120e" opacity=".5"/><ellipse cx="310" cy="686.5" rx="12" ry="3" fill="#0c120e" opacity=".5"/>
<path d="M150 662.3l9.5.2 6.6 4.5 2.4 8.5-1.4 8-5.6 6-8.5 2.5-8.5-2.5-5.5-6.5-1.2-8.5 3.5-7.5z" fill="url(#dg)"/><path d="M146 668l8.5-2.5 7 5.5-1.5 9-9 3-6.5-6z" fill="#ff7438" opacity=".35"/><g font-family="Liberation Sans, sans-serif" font-weight="bold" font-size="5" fill="#5a1606"><text x="147" y="671.5" transform="rotate(-15 149 670)">8</text><text x="150" y="679.5">6</text><text x="159" y="680.5" transform="rotate(20 161 679)">9</text><text x="145.5" y="687.5" transform="rotate(-30 147 686)">3</text></g><path d="M185 663l8 2.3 4.6 6.2.6 7.5-3.2 7.5-6.5 4.5-7.5.5-6.5-4-3-7 .5-8 5-7z" fill="url(#dg)"/><path d="M179 669.5l7-3 6.5 4-.5 8-7.5 4-6.5-5z" fill="#ff7438" opacity=".3"/><g font-family="Liberation Sans, sans-serif" font-weight="bold" fill="#5a1606"><text x="181.5" y="681" font-size="7" transform="rotate(50 184 678.5)">7</text><text x="174" y="681" font-size="4.5" transform="rotate(-70 175.5 680)">2</text><text x="193" y="680" font-size="4.5" transform="rotate(70 194 679)">4</text></g><path d="M215.3 666l15.7 7-.7 9.5-14.3 9-14-8.5V673z" fill="url(#dg)"/><path d="M215.3 666l7.7 12-7.5 2.5-6.5-2.5z" fill="#ff7438" opacity=".3"/><path d="M202 683l7-5 6.5 2.5 7.5-2.5 7.3 4.5-14.3 9z" fill="#b32e0b" opacity=".45"/><g font-family="Liberation Sans, sans-serif" font-weight="bold" fill="#5a1606"><text x="216" y="684" font-size="8" text-anchor="middle">1</text><text x="203.5" y="678" font-size="5" transform="rotate(-35 205.5 676)">7</text><text x="222" y="676" font-size="5" transform="rotate(35 224 675)">9</text></g><path d="M248 662.6l11.7 8.2-.7 13.2-12.6 6.4-11.7-6.4V669.3z" fill="#b32e0b"/><path d="M248 662.6L259 684H234.7z" fill="url(#dg)"/><text x="247" y="682" font-family="Liberation Sans, sans-serif" font-size="8" font-weight="bold" fill="#5a1606" text-anchor="middle">3</text><rect x="267.7" y="665.8" width="21.2" height="22" rx="2.5" fill="#b32e0b"/><rect x="268" y="666" width="20.4" height="20.6" rx="2.2" fill="url(#dg)"/><path d="M269 667h4.5l-4.5 4z" fill="#ffe6d0" opacity=".85"/><text x="278.5" y="679.5" font-family="Liberation Sans, sans-serif" font-size="9" font-weight="bold" fill="#5a1606" text-anchor="middle" transform="rotate(90 278.3 676.5)">5</text><path d="M309.7 661.5L296.4 685.3L309.7 677z" fill="#ec4617"/><path d="M309.7 661.5L321.8 685.7L309.7 677z" fill="#b32e0b"/><path d="M296.4 685.3L309.7 677l12.1 8.7-12.1-2z" fill="#cc3a0d"/><path d="M309.7 662v15M309.7 677l-12.5 8M309.7 677l11.5 8.3" stroke="#ff7438" stroke-width=".9" fill="none" opacity=".8"/></svg>
</body></html>
